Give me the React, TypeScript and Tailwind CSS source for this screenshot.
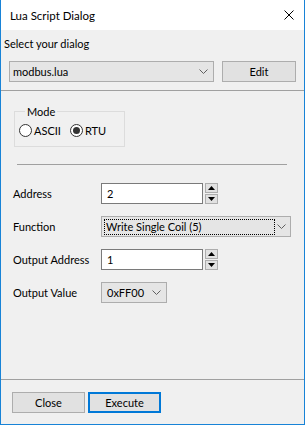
import React from "react";

const font = { fontFamily: 'Lato, "Open Sans", sans-serif' };

// small chevron used by the combo boxes
const Chevron = () => (
  <svg width="9" height="5" viewBox="0 0 9 5" className="shrink-0">
    <path d="M0.5 0.5 L4.5 4.5 L8.5 0.5" fill="none" stroke="#606060" strokeWidth="1" />
  </svg>
);

const Triangle = ({ up }: { up?: boolean }) => (
  <svg width="7" height="4" viewBox="0 0 7 4">
    {up ? <path d="M0 4 L3.5 0 L7 4 Z" fill="#000" /> : <path d="M0 0 L3.5 4 L7 0 Z" fill="#000" />}
  </svg>
);

const SpinBox = ({ value }: { value: string }) => (
  <div className="flex items-start gap-[2px]">
    <div className="w-[102px] h-[21px] bg-white border border-[#7a7a7a] flex items-center pl-[5px]">
      {value}
    </div>
    <div className="flex flex-col gap-[1px]">
      <button className="w-[13px] h-[10px] bg-[#e1e1e1] border border-[#adadad] flex items-center justify-center">
        <Triangle up />
      </button>
      <button className="w-[13px] h-[10px] bg-[#e1e1e1] border border-[#adadad] flex items-center justify-center">
        <Triangle />
      </button>
    </div>
  </div>
);

const Radio = ({ label, checked }: { label: string; checked?: boolean }) => (
  <label className="flex items-center gap-[2px]">
    <span className="w-[13px] h-[13px] rounded-full border border-[#333] bg-white flex items-center justify-center">
      {checked && <span className="w-[7px] h-[7px] rounded-full bg-[#333]" />}
    </span>
    <span>{label}</span>
  </label>
);

const Row = ({ label, children }: { label: string; children: React.ReactNode }) => (
  <div className="flex items-center h-[21px]">
    <div className="w-[88px] whitespace-nowrap">{label}</div>
    {children}
  </div>
);

export default function App() {
  return (
    <div
      className="w-[305px] h-[425px] bg-[#f0f0f0] border-x border-b border-[#1883d7] flex flex-col text-[11px] leading-[15px] text-black"
      style={font}
    >
      {/* Title bar */}
      <div className="h-[30px] bg-white flex items-center justify-between pl-[9px] pr-[10px] shrink-0">
        <span className="text-[11.5px]">Lua Script Dialog</span>
        <svg width="10" height="10" viewBox="0 0 10 10">
          <path d="M0.5 0.5 L9.5 9.5 M9.5 0.5 L0.5 9.5" stroke="#000" strokeWidth="1" />
        </svg>
      </div>

      <div className="pl-[3px] pt-[6px]">Select your dialog</div>

      <div className="flex items-center gap-[8px] pl-[8px] mt-[10px]">
        <div className="w-[205px] h-[21px] bg-[#e5e5e5] border border-[#adadad] flex items-center justify-between pl-[3px] pr-[5px]">
          <span>modbus.lua</span>
          <Chevron />
        </div>
        <button className="w-[74px] h-[21px] bg-[#e1e1e1] border border-[#adadad]">Edit</button>
      </div>

      {/* Main panel */}
      <div className="mt-[8px] flex-1 border-t border-b border-[#a0a0a0] pl-[12px] pt-[13px]">
        <fieldset className="w-[111px] h-[43px] border border-[#dcdcdc] pl-[4px] ml-[1px]">
          <legend className="ml-[6px] px-[2px]">Mode</legend>
          <div className="flex items-center gap-[9px] mt-[4px]">
            <Radio label="ASCII" />
            <Radio label="RTU" checked />
          </div>
        </fieldset>

        <div className="h-px bg-[#a0a0a0] w-[270px] ml-[4px] mt-[17px]" />

        <div className="flex flex-col gap-[12px] mt-[18px]">
          <Row label="Address">
            <SpinBox value="2" />
          </Row>
          <Row label="Function">
            <div className="w-[190px] h-[21px] bg-[#e5e5e5] border border-[#adadad] flex items-center justify-between pl-[2px] pr-[4px]">
              <div className="w-[171px] h-[16px] border border-dotted border-black flex items-center pl-[1px]">
                Write Single Coil (5)
              </div>
              <Chevron />
            </div>
          </Row>
          <Row label="Output Address">
            <SpinBox value="1" />
          </Row>
          <Row label="Output Value">
            <div className="w-[66px] h-[21px] bg-[#e5e5e5] border border-[#adadad] flex items-center justify-between pl-[5px] pr-[5px]">
              <span>0xFF00</span>
              <Chevron />
            </div>
          </Row>
        </div>
      </div>

      {/* Footer buttons */}
      <div className="h-[44px] shrink-0 flex items-start gap-[3px] pl-[11px] pt-[12px]">
        <button className="w-[73px] h-[21px] bg-[#e1e1e1] border border-[#adadad]">Close</button>
        <button className="w-[73px] h-[21px] bg-[#e1e1e1] border-2 border-[#0078d7]">Execute</button>
      </div>
    </div>
  );
}
